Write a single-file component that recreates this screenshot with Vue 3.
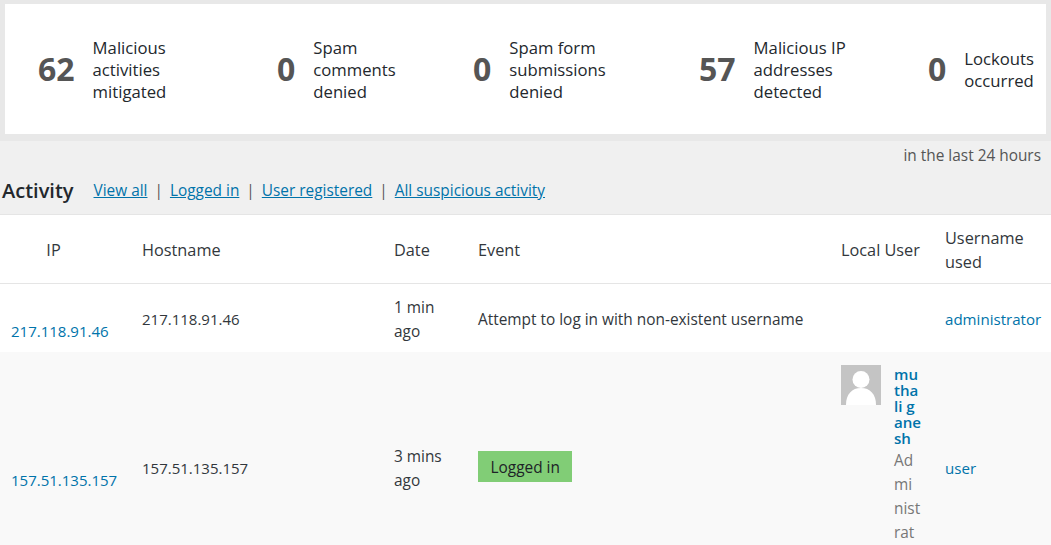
<script setup>
const stats = [
  { value: 62, lines: ['Malicious', 'activities', 'mitigated'] },
  { value: 0, lines: ['Spam', 'comments', 'denied'] },
  { value: 0, lines: ['Spam form', 'submissions', 'denied'] },
  { value: 57, lines: ['Malicious IP', 'addresses', 'detected'] },
  { value: 0, lines: ['Lockouts', 'occurred'] },
];

const filters = ['View all', 'Logged in', 'User registered', 'All suspicious activity'];
</script>

<template>
  <div class="page">
    <section class="summary">
      <div class="summary-inner">
        <div v-for="(s, i) in stats" :key="i" class="stat">
          <span class="stat-value">{{ s.value }}</span>
          <span class="stat-label">
            <span v-for="line in s.lines" :key="line">{{ line }}</span>
          </span>
        </div>
      </div>
    </section>

    <p class="period">in the last 24 hours</p>

    <div class="filter-bar">
      <h2>Activity</h2>
      <nav class="filters">
        <template v-for="(f, i) in filters" :key="f">
          <span v-if="i" class="sep">|</span>
          <a href="#">{{ f }}</a>
        </template>
      </nav>
    </div>

    <table class="log">
      <colgroup>
        <col class="c-ip" />
        <col class="c-host" />
        <col class="c-date" />
        <col class="c-event" />
        <col class="c-user" />
        <col />
      </colgroup>
      <thead>
        <tr>
          <th class="th-ip">IP</th>
          <th>Hostname</th>
          <th>Date</th>
          <th>Event</th>
          <th>Local User</th>
          <th>Username used</th>
        </tr>
      </thead>
      <tbody>
        <tr>
          <td><a href="#" class="ip">217.118.91.46</a></td>
          <td class="num">217.118.91.46</td>
          <td>1 min ago</td>
          <td>Attempt to log in with non-existent username</td>
          <td></td>
          <td class="num"><a href="#">administrator</a></td>
        </tr>
        <tr class="alt">
          <td><a href="#" class="ip">157.51.135.157</a></td>
          <td class="num">157.51.135.157</td>
          <td>3 mins ago</td>
          <td class="event-cell"><span class="badge">Logged in</span></td>
          <td class="local-user">
            <div class="user">
              <svg class="avatar" viewBox="0 0 40 40" width="40" height="40">
                <rect width="40" height="40" fill="#c4c4c4" />
                <circle cx="20" cy="14.5" r="8.5" fill="#fff" />
                <path d="M5 40c0-11 6-17 15-17s15 6 15 17z" fill="#fff" />
              </svg>
              <div class="user-text">
                <a href="#" class="user-name">mu<br />tha<br />li g<br />ane<br />sh</a>
                <span class="user-role">Ad<br />mi<br />nist<br />rat<br />or</span>
              </div>
            </div>
          </td>
          <td class="num"><a href="#">user</a></td>
        </tr>
      </tbody>
    </table>
  </div>
</template>

<style>
html, body {
  margin: 0;
  overflow: hidden;
  background: #f0f0f0;
}
</style>

<style scoped>
.page {
  font-family: "Open Sans", "Noto Sans", sans-serif;
  font-size: 15.4px;
  line-height: 24px;
  color: #32373c;
  width: 1051px;
  height: 545px;
  overflow: hidden;
}

.summary {
  background: #e8e8e8;
  padding: 4px 5px 7px;
}

.summary-inner {
  background: #fff;
  height: 130px;
  padding-left: 33px;
  display: grid;
  grid-template-columns: 239px 196px 226px 229px 1fr;
  align-items: center;
}

.stat {
  display: flex;
  align-items: center;
  gap: 18px;
}

.stat-value {
  font-size: 32px;
  font-weight: 700;
  line-height: 40px;
  color: #555;
}

.stat-label {
  display: flex;
  flex-direction: column;
  padding-top: 2px;
  font-size: 16.7px;
  line-height: 22px;
  color: #23282d;
}

.period {
  margin: 0;
  padding: 3px 10px 0 0;
  text-align: right;
  color: #555;
}

.filter-bar {
  display: flex;
  align-items: center;
  height: 46px;
  padding: 0 0 0 2px;
  border-bottom: 1px solid #e5e5e5;
}

.filter-bar h2 {
  margin: 0 20px 0 0;
  font-size: 20px;
  font-weight: 600;
  color: #23282d;
}

.filters a {
  color: #0073aa;
}

.sep {
  margin: 0 7px;
  color: #555;
}

.log {
  width: 1051px;
  table-layout: fixed;
  border-collapse: collapse;
  background: #fff;
}

.c-ip { width: 131px; }
.c-host { width: 252px; }
.c-date { width: 84px; }
.c-event { width: 363px; }
.c-user { width: 104px; }

th {
  padding: 11px 11px 9px;
  font-size: 16.3px;
  font-weight: 400;
  text-align: left;
  border-bottom: 1px solid #e5e5e5;
}

th.th-ip {
  padding: 11px 24px 9px 0;
  text-align: center;
}

td {
  padding: 12px 11px 8px;
  vertical-align: middle;
}

td a {
  color: #0073aa;
  font-size: 15.1px;
  text-decoration: none;
}

td.num {
  padding: 11px 11px 9px;
  font-size: 15px;
}

.ip {
  display: block;
  position: relative;
  top: 11px;
  font-size: 15px;
}

.alt {
  background: #f9f9f9;
}

.event-cell {
  padding: 9px 11px 11px;
}

.badge {
  display: inline-block;
  padding: 5px 12.5px 2px;
  background: #81cd76;
  color: #1d2327;
}

.local-user {
  padding-top: 13px;
  padding-bottom: 13px;
  vertical-align: top;
}

.user {
  display: flex;
  gap: 13px;
}

.avatar {
  flex: none;
}

.user-text {
  display: flex;
  flex-direction: column;
}

.user-name {
  font-weight: 600;
  line-height: 16px;
  margin-top: 1px;
}

.user-role {
  margin-top: 3px;
  color: #777;
}
</style>
